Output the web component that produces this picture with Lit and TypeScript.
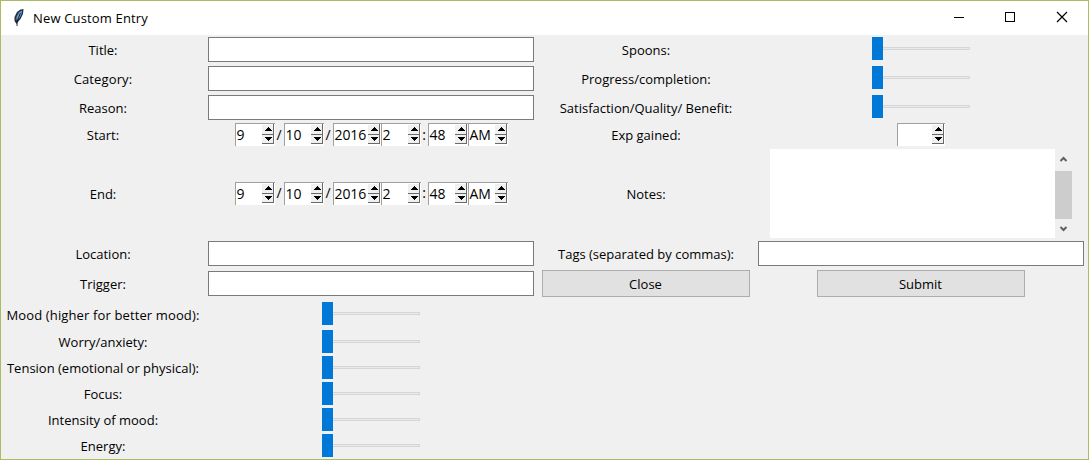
import { LitElement, html, css } from "lit";
import { customElement, property } from "lit/decorators.js";

@customElement("tk-spin")
class TkSpin extends LitElement {
  @property() value = "";
  @property({ type: Number }) width = 40;

  static styles = css`
    :host { display: block; }
    .spin { box-sizing: border-box; height: 23px; display: flex; background: #fff; border-left: 1px solid #a0a0a0; border-top: 1px solid #a0a0a0; }
    .value { flex: 1; min-width: 0; padding-left: 1px; font: 14px/21px "Open Sans", sans-serif; letter-spacing: -0.1px; white-space: nowrap; }
    .arrows { flex: none; display: block; }
  `;

  render() {
    return html`<div class="spin" style="width:${this.width}px">
      <div class="value">${this.value}</div>
      <svg class="arrows" width="13" height="22" shape-rendering="crispEdges">
        <path d="M0 1h12v19H0z" fill="#f0f0f0" />
        <path d="M11 0h1v20h-1zM0 10h12v1H0zM0 19h12v1H0z" fill="#696969" />
        <path d="M6 3h1v1h1v1h1v1h1v1H3v-1h1v-1h1v-1h1zM3 13h7v1H9v1H8v1H7v1H6v-1H5v-1H4v-1H3z" fill="#000" />
      </svg>
    </div>`;
  }
}

@customElement("tk-scale")
class TkScale extends LitElement {
  static styles = css`
    :host { display: block; }
    .scale { width: 98px; height: 23px; display: flex; align-items: center; }
    .thumb { width: 11px; height: 23px; background: #0078d7; }
    .track { flex: 1; height: 3px; box-sizing: border-box; border: 1px solid #d6d6d6; border-left: 0; background: #e7eaea; }
  `;
  render() {
    return html`<div class="scale"><div class="thumb"></div><div class="track"></div></div>`;
  }
}

@customElement("app-root")
class AppRoot extends LitElement {
  static styles = css`
    :host { display: block; }
    .window { box-sizing: border-box; width: 1089px; height: 460px; border: 1px solid #abbb64; background: #f0f0f0; color: #000; font: 13px/18px "Open Sans", sans-serif; overflow: hidden; }
    .titlebar { height: 34px; background: #fff; display: flex; align-items: center; }
    .feather { margin-left: 11px; }
    .title { margin-left: 7px; flex: 1; white-space: nowrap; letter-spacing: 0.16px; }
    .form { display: grid; grid-template-columns: 204px 332px 218px 332px; grid-template-rows: 29px 29px 29px 25px 92px 29px 31px 29px 27px 25px 27px 25px 27px; }
    .cell { display: flex; align-items: center; justify-content: center; white-space: nowrap; min-width: 0; }
    .tall { padding-top: 1px; }
    .low { padding-top: 2px; }
    .high { padding-bottom: 2px; }
    .wide { letter-spacing: 0.13px; }
    .entry { box-sizing: border-box; width: 326px; height: 25px; border: 1px solid #7a7a7a; background: #fff; }
    .button { box-sizing: border-box; width: 208px; height: 27px; border: 1px solid #adadad; background: #e1e1e1; display: flex; align-items: center; justify-content: center; padding-right: 1px; }
    .sep { width: 9px; text-align: center; font-size: 14px; }
    .colon { width: 7px; }
    .notes { width: 302px; display: flex; height: 89px; }
    .paper { width: 285px; background: #fff; }
    .bar { width: 17px; height: 89px; display: block; }
    .rest { grid-column: 3 / 5; grid-row: 8 / 14; }
  `;

  label(text: string, extra = "") {
    return html`<div class="cell ${extra}">${text}</div>`;
  }
  entry() {
    return html`<div class="cell"><div class="entry"></div></div>`;
  }
  scale(extra = "") {
    return html`<div class="cell ${extra}"><tk-scale></tk-scale></div>`;
  }
  stamp() {
    return html`<div class="cell">
      <tk-spin value="9"></tk-spin><span class="sep">/</span><tk-spin value="10"></tk-spin><span class="sep">/</span
      ><tk-spin value="2016" width="48"></tk-spin><tk-spin value="2"></tk-spin><span class="sep colon">:</span
      ><tk-spin value="48"></tk-spin><tk-spin value="AM"></tk-spin>
    </div>`;
  }

  render() {
    return html`<div class="window">
      <div class="titlebar">
        <svg class="feather" width="14" height="20" viewBox="0 0 14 20">
          <path d="M4.500 16 2.500 13 2.500 9 5 4 8.500 1.500 11.500 1 11 6 8.500 11 5.500 14.500Z" fill="#26323f" />
          <path d="M4.500 12.500 4.500 9 7 4.500 10 2.500 9.500 6 7.500 10Z" fill="#6aa3e6" />
          <path d="M5 18 5.200 13 8.500 5" fill="none" stroke="#111" stroke-width=".9" />
        </svg>
        <span class="title">New Custom Entry</span>
        <svg width="140" height="34" fill="none" stroke="#000">
          <path d="M6 16.500h10M57.500 11.500h9v9h-9z" shape-rendering="crispEdges" />
          <path d="M109 11l10 10M119 11l-10 10" stroke-width="1.200" />
        </svg>
      </div>
      <div class="form">
        ${this.label("Title:")}${this.entry()}${this.label("Spoons:")}${this.scale("high")}
        ${this.label("Category:", "wide")}${this.entry()}${this.label("Progress/completion:")}${this.scale("high")}
        ${this.label("Reason:")}${this.entry()}${this.label("Satisfaction/Quality/ Benefit:")}${this.scale("high")}
        ${this.label("Start:")}${this.stamp()}${this.label("Exp gained:")}
        <div class="cell"><tk-spin width="48"></tk-spin></div>
        ${this.label("End:", "low")}${this.stamp()}${this.label("Notes:", "low")}
        <div class="cell tall"><div class="notes"><div class="paper"></div>
          <svg class="bar" width="17" height="89"><path d="M0 22h17v48H0z" fill="#cdcdcd" /><path d="M5.500 12l3-3 3 3M5.500 78l3 3 3-3" fill="none" stroke="#606060" stroke-width="2" /></svg>
        </div></div>
        ${this.label("Location:")}${this.entry()}${this.label("Tags (separated by commas):")}${this.entry()}
        ${this.label("Trigger:")}${this.entry()}
        <div class="cell"><div class="button">Close</div></div>
        <div class="cell"><div class="button">Submit</div></div>
        <div class="rest"></div>
        ${this.label("Mood (higher for better mood):", "wide low")}${this.scale()}
        ${["Worry/anxiety:", "Tension (emotional or physical):", "Focus:", "Intensity of mood:", "Energy:"].map((t) => html`${this.label(t)}${this.scale()}`)}
      </div>
    </div>`;
  }
}
